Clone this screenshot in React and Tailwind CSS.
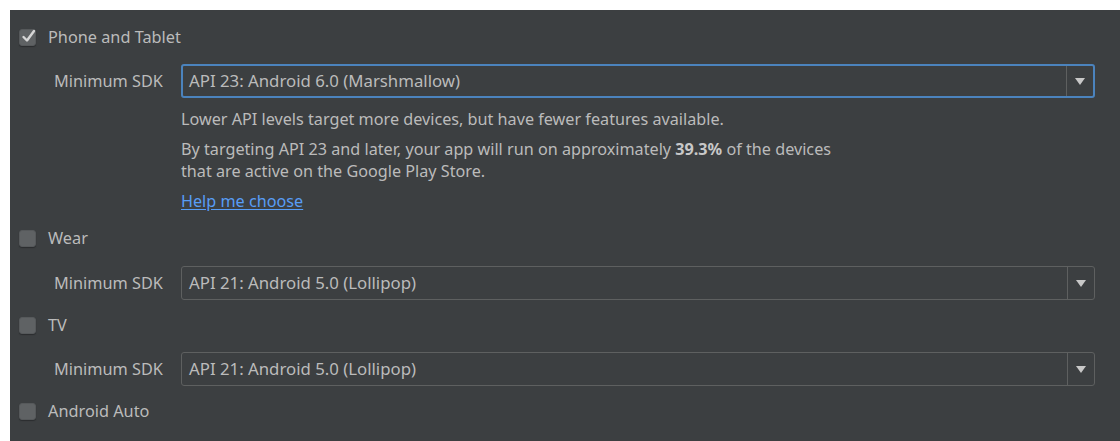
import React from "react";

const font = { fontFamily: '"Noto Sans", "Liberation Sans", sans-serif' };

function Check({ checked }) {
  return (
    <div className="relative w-[17px] h-[17px] rounded-[3px] bg-[#5f6264] border border-[#56595b] shadow-[0_1px_1px_#2b2d2f]">
      {checked && (
        <svg className="absolute left-[0px] top-[-3px]" width="17" height="18" viewBox="0 0 17 18">
          <path d="M3.5 10 L7 13.5 L14 4" fill="none" stroke="#d6d6d6" strokeWidth="2.4" strokeLinecap="round" strokeLinejoin="round" />
        </svg>
      )}
    </div>
  );
}

function CheckRow({ label, checked }) {
  return (
    <div className="flex items-center h-[28px] pl-[9px]">
      <Check checked={checked} />
      <span className="ml-[12px] text-[16.3px] text-[#bbbbbb]">{label}</span>
    </div>
  );
}

function Combo({ value, focused }) {
  return (
    <div
      className={
        focused
          ? "flex flex-1 h-[34px] rounded-[3px] border-2 border-[#4b83bd] bg-[#3c3f41]"
          : "flex flex-1 h-[34px] rounded-[3px] border border-[#5e6060] bg-[#3c3f41]"
      }
    >
      <div className={focused ? "flex-1 flex items-center pl-[6px] text-[16.8px] text-[#bbbbbb]" : "flex-1 flex items-center pl-[7px] text-[16.8px] text-[#bbbbbb]"}>{value}</div>
      <div className="w-[27px] flex items-center justify-center border-l border-[#5e6060]">
        <svg width="10" height="7" viewBox="0 0 10 7">
          <path d="M0 0 H10 L5 7 Z" fill="#c8c8c8" />
        </svg>
      </div>
    </div>
  );
}

function SdkRow({ value, focused }) {
  return (
    <div className="flex items-center pl-[44px] pr-[25px]">
      <span className="w-[127px] text-[16.3px] text-[#bbbbbb]">Minimum SDK</span>
      <Combo value={value} focused={focused} />
    </div>
  );
}

export default function App() {
  return (
    <div className="w-[1120px] h-[441px] bg-white pt-[10px] pl-[10px]" style={font}>
      <div className="h-full bg-[#3c3f41] pt-[13px]">
        <CheckRow label="Phone and Tablet" checked />
        <div className="mt-[13px]">
          <SdkRow value="API 23: Android 6.0 (Marshmallow)" focused />
        </div>
        <div className="pl-[171px] text-[16.2px] text-[#bbbbbb] leading-[22px]">
          <div className="mt-[10px]">Lower API levels target more devices, but have fewer features available.</div>
          <div className="mt-[8px]">
            By targeting API 23 and later, your app will run on approximately <b className="font-bold text-[#c8c8c8]">39.3%</b> of the devices
          </div>
          <div>that are active on the Google Play Store.</div>
          <div className="mt-[8px]">
            <span className="text-[#589df6] underline underline-offset-2">Help me choose</span>
          </div>
        </div>
        <div className="mt-[12px]">
          <CheckRow label="Wear" />
        </div>
        <div className="mt-[14px]">
          <SdkRow value="API 21: Android 5.0 (Lollipop)" />
        </div>
        <div className="mt-[11px]">
          <CheckRow label="TV" />
        </div>
        <div className="mt-[13px]">
          <SdkRow value="API 21: Android 5.0 (Lollipop)" />
        </div>
        <div className="mt-[11px]">
          <CheckRow label="Android Auto" />
        </div>
      </div>
    </div>
  );
}
